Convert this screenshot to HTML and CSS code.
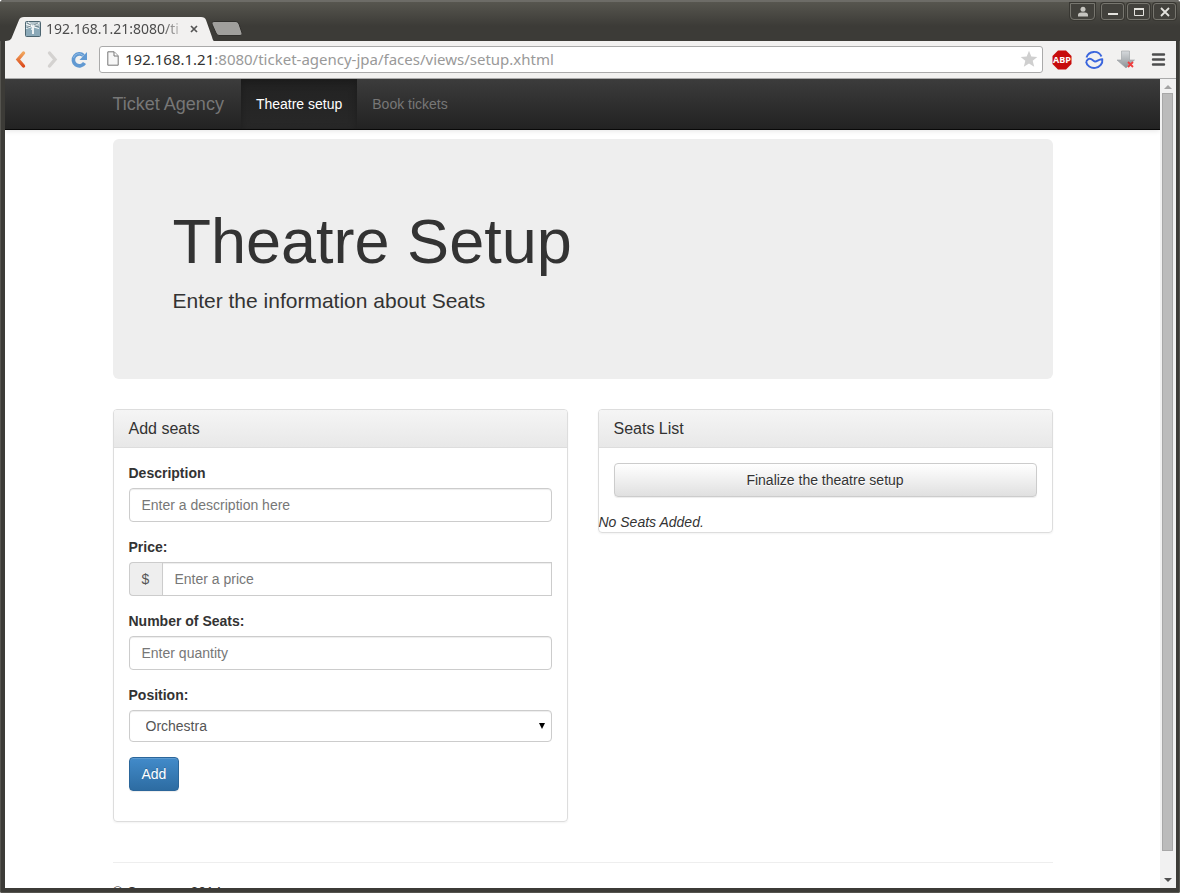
FILE: index.html
```html
<!DOCTYPE html>
<html lang="en">
<head>
  <meta charset="UTF-8">
  <meta name="viewport" content="width=device-width, initial-scale=1">
  <title>Ticket Agency</title>
  <link rel="stylesheet" href="styles.css">
</head>
<body>
  <div class="window">
    <header class="titlebar">
      <div class="tab">
        <svg class="tab-shape" viewBox="0 0 210 24" preserveAspectRatio="none" aria-hidden="true">
          <path d="M0 24C5 24 7 23 8 20L15 3Q16 0 20 0H197Q201 0 202 3L208 20Q209 24 210 24Z" fill="#f2f1f0"/>
        </svg>
        <svg class="favicon" viewBox="0 0 16 16" aria-hidden="true">
          <rect x=".5" y=".5" width="15" height="15" rx="1" fill="#8ba9b8" stroke="#4d6570"/>
          <path d="M1 1h14v5H1z" fill="#b4c4cb"/>
          <path d="M1 3l6 2.500L14 2M3 1l4 4M1 7.500l6-2 7 2" fill="none" stroke="#f4f7f8" stroke-width="1.200"/>
          <path d="M2 2l4 2M9 4l4-2M2 6.500l4-1.500M10 5l4 1" stroke="#4d6570" stroke-width=".7"/>
          <path d="M7 6h2v7H7V9H6z" fill="#eef3f5"/>
        </svg>
        <span class="tab-title">192.168.1.21:8080/ti</span>
        <button class="tab-close" type="button" aria-label="Close tab">
          <svg width="8" height="8" viewBox="0 0 8 8"><path d="M1 1l6 6M7 1L1 7" stroke="#555" stroke-width="1.7"/></svg>
        </button>
      </div>
      <button class="new-tab" type="button" aria-label="New tab">
        <svg width="32" height="16" viewBox="0 0 32 16"><path d="M3 .5H25Q27 .5 28 3L31 12Q32 14.500 29 14.500H8Q6 14.500 5 12L1 3Q0 .5 3 .5Z" fill="#a09f9c" stroke="#302f2c"/></svg>
      </button>
      <div class="window-buttons">
        <button class="window-button user" type="button" aria-label="User">
          <svg width="12" height="12" viewBox="0 0 12 12"><circle cx="6" cy="3.300" r="2.500" fill="#c6c5c0"/><path d="M1 10.500V9Q1 6.500 4 6.500H8Q11 6.500 11 9V10.500Z" fill="#c6c5c0"/></svg>
        </button>
        <button class="window-button" type="button" aria-label="Minimize">
          <svg width="12" height="12" viewBox="0 0 12 12"><path d="M1 8h10" stroke="#e4e3de" stroke-width="2"/></svg>
        </button>
        <button class="window-button" type="button" aria-label="Maximize">
          <svg width="12" height="12" viewBox="0 0 12 12"><path d="M1.500 2.500h9v7h-9z" fill="none" stroke="#e4e3de"/><path d="M1 3h10" stroke="#e4e3de" stroke-width="2"/></svg>
        </button>
        <button class="window-button" type="button" aria-label="Close">
          <svg width="12" height="12" viewBox="0 0 12 12"><path d="M2 2l8 8M10 2l-8 8" stroke="#e4e3de" stroke-width="1.800"/></svg>
        </button>
      </div>
    </header>

    <div class="toolbar">
      <button class="tool" type="button" aria-label="Back">
        <svg width="20" height="20" viewBox="0 0 20 20"><defs><linearGradient id="back" x2="0" y2="1"><stop stop-color="#f0a45c"/><stop offset="1" stop-color="#dc4c1c"/></linearGradient></defs><path d="M11.500 3L6 9.500L11.500 16" fill="none" stroke="url(#back)" stroke-width="3.400" stroke-linecap="round"/></svg>
      </button>
      <button class="tool" type="button" aria-label="Forward">
        <svg width="20" height="20" viewBox="0 0 20 20"><path d="M8.500 3L14 9.500L8.500 16" fill="none" stroke="#d4d2d0" stroke-width="3.400" stroke-linecap="round"/></svg>
      </button>
      <button class="tool" type="button" aria-label="Reload">
        <svg width="20" height="20" viewBox="0 0 20 20"><path d="M13.500 5.500A6 6 0 1 0 14.500 13" fill="none" stroke="#6199d2" stroke-width="3.600"/><path d="M17 2v8H9.500z" fill="#6199d2"/><path d="M13 5.500A5.500 5.500 0 0 0 3.500 8" fill="none" stroke="#8fbbe6" stroke-width="1"/></svg>
      </button>
      <div class="address-bar">
        <svg class="page-icon" width="12" height="15" viewBox="0 0 12 15" aria-hidden="true"><path d="M.8.8h6.400l4 4v9.400H.8z" fill="#f7f7f7" stroke="#777"/><path d="M7 1v4h4" fill="#fff" stroke="#777"/></svg>
        <label class="address-host" for="address">192.168.1.21</label>
        <input class="address-path" id="address" type="text" value=":8080/ticket-agency-jpa/faces/views/setup.xhtml">
        <button class="star" type="button" aria-label="Bookmark">
          <svg width="18" height="18" viewBox="0 0 18 18"><path d="M9 .8l2.300 5.600 6 .5-4.600 3.900 1.500 6L9 13.600l-5.200 3.200 1.500-6L.7 6.900l6-.5z" fill="#cfcfcf"/></svg>
        </button>
      </div>
      <button class="tool" type="button" aria-label="Ad blocker">
        <svg width="20" height="20" viewBox="0 0 20 20"><path d="M6 .5h8l5.500 5.500v8L14 19.500H6L.5 14V6z" fill="#c70d0d"/><text class="abp" x="10" y="13" text-anchor="middle">ABP</text></svg>
      </button>
      <button class="tool" type="button" aria-label="Sync">
        <svg width="20" height="20" viewBox="0 0 20 20"><path d="M2.500 7.500A8 7.700 0 0 1 17.500 6.500M2 11.500A8.200 7.500 0 0 0 18.300 9.300C14.500 9 13 12 11 11.500S8 8.500 5.500 8.800 3.500 11 2 11.500" fill="none" stroke="#3b66dd" stroke-width="1.900"/></svg>
      </button>
      <button class="tool" type="button" aria-label="Downloads">
        <svg width="20" height="20" viewBox="0 0 20 20"><defs><linearGradient id="down" x2="0" y2="1"><stop stop-color="#d6d9dc"/><stop offset="1" stop-color="#8d9296"/></linearGradient></defs><path d="M5.500 1h8v9h5L10 18 1 10h4.500z" fill="url(#down)" stroke="#9a9fa3" stroke-width=".6"/><path d="M12 12l5 5M17 12l-5 5" stroke="#ef3e3e" stroke-width="1.800"/></svg>
      </button>
      <button class="tool" type="button" aria-label="Menu">
        <svg width="20" height="20" viewBox="0 0 20 20"><path d="M5 4.500h11M5 9.500h11M5 14.500h11" stroke="#4d4d4d" stroke-width="2.400" stroke-linecap="round"/></svg>
      </button>
    </div>

    <div class="viewport">
      <div class="page">
        <nav class="navbar">
          <div class="container nav-row">
            <a class="brand" href="#">Ticket Agency</a>
            <a class="nav-link active" href="#">Theatre setup</a>
            <a class="nav-link" href="#">Book tickets</a>
          </div>
        </nav>

        <main class="container">
          <div class="jumbotron">
            <h1>Theatre Setup</h1>
            <p>Enter the information about Seats</p>
          </div>

          <div class="row">
            <section class="panel">
              <h3 class="panel-heading">Add seats</h3>
              <form class="panel-body">
                <div class="form-group">
                  <label for="description">Description</label>
                  <input class="form-control" id="description" type="text" placeholder="Enter a description here">
                </div>
                <div class="form-group">
                  <label for="price">Price:</label>
                  <div class="input-group">
                    <span class="addon">$</span>
                    <input class="form-control" id="price" type="text" placeholder="Enter a price">
                  </div>
                </div>
                <div class="form-group">
                  <label for="quantity">Number of Seats:</label>
                  <input class="form-control" id="quantity" type="text" placeholder="Enter quantity">
                </div>
                <div class="form-group">
                  <label for="position">Position:</label>
                  <div class="select-wrap">
                    <select class="form-control" id="position">
                      <option>Orchestra</option>
                    </select>
                    <svg class="caret" width="6" height="6" viewBox="0 0 6 6" aria-hidden="true"><path d="M0 0h6L3 6z" fill="#000"/></svg>
                  </div>
                </div>
                <div class="form-group">
                  <button class="btn btn-primary" type="button">Add</button>
                </div>
              </form>
            </section>

            <section class="panel">
              <h3 class="panel-heading">Seats List</h3>
              <div class="panel-body">
                <button class="btn btn-default" type="button">Finalize the theatre setup</button>
              </div>
              <em class="empty">No Seats Added.</em>
            </section>
          </div>

          <footer class="footer">
            <p>© Company 2014</p>
          </footer>
        </main>
      </div>

      <div class="scrollbar" aria-hidden="true">
        <svg width="8" height="4" viewBox="0 0 8 4"><path d="M4 0l4 4H0z" fill="#a3a3a3"/></svg>
        <div class="thumb"></div>
        <svg width="8" height="4" viewBox="0 0 8 4"><path d="M0 0h8L4 4z" fill="#505050"/></svg>
      </div>
    </div>
  </div>
</body>
</html>
```
FILE: styles.css
```css
* {
  box-sizing: border-box;
}

body {
  margin: 0;
  background: #fff;
  color: #333;
  font-family: "Liberation Sans", Arial, sans-serif;
  font-size: 14px;
  line-height: 20px;
}

button,
input,
select {
  font: inherit;
  margin: 0;
}

svg {
  display: block;
}

/* Browser window */
.window {
  display: flex;
  flex-direction: column;
  height: 100vh;
  padding: 0 4px 5px 5px;
  background: #3c3b37;
  border-radius: 4px 4px 2px 2px;
  box-shadow: inset 0 0 0 1px #55544f;
  overflow: hidden;
}

.titlebar {
  display: flex;
  flex: none;
  align-items: flex-end;
  height: 41px;
  margin: 0 -4px 0 -5px;
  padding: 0 4px;
  background: linear-gradient(#57564f, #3c3b37 24px);
  border-top: 2px solid #6d6c67;
  font-family: "Noto Sans", "Open Sans", sans-serif;
}

.tab {
  position: relative;
  display: flex;
  align-items: center;
  width: 210px;
  height: 24px;
  padding: 0 16px 0 21px;
}

.tab-shape {
  position: absolute;
  inset: 0;
  width: 100%;
  height: 100%;
}

.favicon {
  position: relative;
  flex: none;
  width: 16px;
  height: 16px;
}

.tab-title {
  position: relative;
  width: 136px;
  margin-left: 5px;
  overflow: hidden;
  color: #4c4c4c;
  font-size: 14px;
  white-space: nowrap;
  -webkit-mask-image: linear-gradient(to right, #000 116px, transparent 140px);
  mask-image: linear-gradient(to right, #000 116px, transparent 140px);
}

.tab-close,
.new-tab,
.tool,
.star {
  position: relative;
  flex: none;
  padding: 0;
  background: none;
  border: 0;
}

.tab-close {
  margin-left: 8px;
}

.new-tab {
  margin: 0 0 4px -3px;
}

.window-buttons {
  display: flex;
  align-self: flex-start;
  gap: 3px;
  margin-left: auto;
  margin-top: 1px;
}

.window-button {
  display: flex;
  align-items: center;
  justify-content: center;
  width: 23px;
  height: 17px;
  padding: 0;
  background: #42413c;
  border: 1px solid #77766f;
  border-radius: 3px;
  box-shadow: 0 0 0 1px #383732;
}

.window-button.user {
  width: 25px;
  margin-right: 3px;
  border-radius: 0 0 4px 4px;
}

.toolbar {
  display: flex;
  flex: none;
  align-items: center;
  gap: 12px;
  height: 38px;
  padding: 0 8px 0 7px;
  background: #f2f1f0;
  border-bottom: 1px solid #aaa;
}

.toolbar .tool:nth-child(2),
.toolbar .tool:nth-child(3) {
  margin-left: -3px;
}

.address-bar {
  display: flex;
  flex: 1;
  align-items: center;
  min-width: 0;
  height: 27px;
  margin: 0 -3px;
  padding: 0 4px 2px 7px;
  background: #fff;
  border: 1px solid #aaa;
  border-radius: 3px;
  font-family: "Noto Sans", "Open Sans", sans-serif;
  font-size: 15px;
}

.page-icon {
  flex: none;
  margin-right: 6px;
}

.address-host {
  color: #333;
}

.address-path {
  flex: 1;
  min-width: 0;
  height: 24px;
  padding: 0;
  background: none;
  border: 0;
  color: #999;
}

.abp {
  fill: #fff;
  font-family: "Open Sans", sans-serif;
  font-size: 9px;
  font-weight: bold;
}

.viewport {
  display: flex;
  flex: 1;
  min-height: 0;
  background: #fff;
}

.page {
  flex: 1;
  min-width: 0;
  overflow: hidden;
}

.scrollbar {
  display: flex;
  flex: none;
  flex-direction: column;
  align-items: center;
  width: 16px;
  padding: 6px 1px 6px 0;
  background: #f1f1f1;
}

.thumb {
  flex: 1;
  width: 11px;
  margin: 4px 0 27px;
  background: #bbb;
  border: 1px solid #a8a8a8;
}

/* Page */
.container {
  max-width: 970px;
  margin: 0 auto;
  padding: 0 15px;
}

.navbar {
  margin-bottom: 9px;
  background: linear-gradient(#3c3c3c, #222);
  border-bottom: 1px solid #080808;
  box-shadow: 0 1px 5px rgba(0, 0, 0, 0.1);
}

.nav-row {
  display: flex;
}

.brand,
.nav-link {
  padding: 15px;
  color: #777;
  text-decoration: none;
}

.brand {
  padding: 15px 17px 15px 0;
  font-size: 18px;
}

.nav-link.active {
  background: linear-gradient(#222, #282828);
  box-shadow: inset 0 3px 9px rgba(0, 0, 0, 0.25);
  color: #fff;
}

.jumbotron {
  margin-bottom: 30px;
  padding: 48px 60px;
  background: #eee;
  border-radius: 6px;
}

.jumbotron h1 {
  margin: 20px 0 10px;
  font-size: 63px;
  font-weight: normal;
  line-height: 69px;
}

.jumbotron p {
  margin: 0 0 15px;
  font-size: 21px;
  line-height: 30px;
}

.row {
  display: grid;
  grid-template-columns: 1fr 1fr;
  gap: 30px;
  align-items: start;
}

.panel {
  border: 1px solid #ddd;
  border-radius: 4px;
  box-shadow: 0 1px 2px rgba(0, 0, 0, 0.05);
}

.panel-heading {
  margin: 0;
  padding: 10px 15px;
  background: linear-gradient(#f5f5f5, #e8e8e8);
  border-bottom: 1px solid #ddd;
  border-radius: 3px 3px 0 0;
  font-size: 16px;
  font-weight: normal;
  line-height: 17px;
}

.panel-body {
  padding: 15px;
}

.form-group {
  margin-bottom: 15px;
}

.form-group label {
  display: block;
  margin-bottom: 5px;
  font-weight: bold;
}

.form-control {
  display: block;
  width: 100%;
  height: 34px;
  padding: 6px 12px;
  background: #fff;
  border: 1px solid #ccc;
  border-radius: 4px;
  box-shadow: inset 0 1px 1px rgba(0, 0, 0, 0.075);
  color: #555;
}

.form-control::placeholder {
  color: #777;
}

.input-group {
  display: flex;
}

.input-group .form-control {
  flex: 1;
  min-width: 0;
  border-radius: 0;
}

.addon {
  flex: none;
  width: 33px;
  padding: 6px 0;
  background: #eee;
  border: 1px solid #ccc;
  border-right: 0;
  border-radius: 4px 0 0 4px;
  color: #555;
  text-align: center;
}

.select-wrap {
  position: relative;
}

.select-wrap .form-control {
  height: 32px;
  padding: 5px 16px;
  appearance: none;
}

.caret {
  position: absolute;
  top: 13px;
  right: 7px;
  pointer-events: none;
}

.btn {
  display: block;
  padding: 6px 12px;
  border: 1px solid #ccc;
  border-radius: 4px;
  box-shadow: inset 0 1px 0 rgba(255, 255, 255, 0.15), 0 1px 1px rgba(0, 0, 0, 0.075);
}

.btn-primary {
  background: linear-gradient(#428bca, #2d6ca2);
  border-color: #2b669a;
  color: #fff;
  text-shadow: 0 -1px 0 rgba(0, 0, 0, 0.2);
}

.btn-default {
  width: 100%;
  background: linear-gradient(#fff, #e0e0e0);
  color: #333;
  text-shadow: 0 1px 0 #fff;
}

.empty {
  display: block;
}

.footer {
  margin-top: 40px;
  padding-top: 19px;
  border-top: 1px solid #eee;
}

.footer p {
  margin: 0;
}

@media (max-width: 700px) {
  .row {
    grid-template-columns: 1fr;
  }

  .jumbotron {
    padding: 30px 15px;
  }
}
```
